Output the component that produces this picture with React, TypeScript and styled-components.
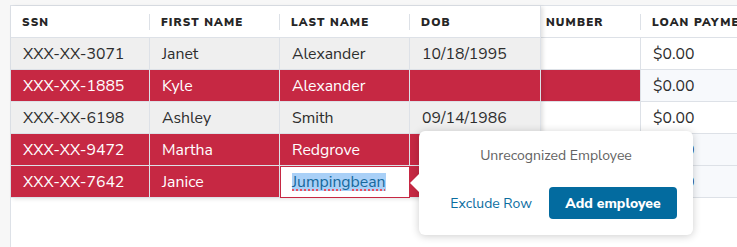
import React from "react";
import styled, { createGlobalStyle, css } from "styled-components";

const GlobalStyle = createGlobalStyle`
  html, body {
    margin: 0;
    padding: 0;
    background: #f7f7f7;
    font-family: "Nunito Sans", Lato, "Open Sans", sans-serif;
  }
`;

type Tone = "grey" | "white" | "red" | "tint";

type RowData = {
  ssn: string;
  first: string;
  last: string;
  dob: string;
  flagged: boolean;
  editing?: boolean;
};

const rows: RowData[] = [
  { ssn: "XXX-XX-3071", first: "Janet", last: "Alexander", dob: "10/18/1995", flagged: false },
  { ssn: "XXX-XX-1885", first: "Kyle", last: "Alexander", dob: "", flagged: true },
  { ssn: "XXX-XX-6198", first: "Ashley", last: "Smith", dob: "09/14/1986", flagged: false },
  { ssn: "XXX-XX-9472", first: "Martha", last: "Redgrove", dob: "", flagged: true },
  { ssn: "XXX-XX-7642", first: "Janice", last: "Jumpingbean", dob: "", flagged: true, editing: true },
];

const BORDER = "#dde1e7";
const RED = "#c62843";

const Page = styled.div`
  height: 247px;
  padding: 5px 0 0 10px;
  box-sizing: border-box;
  overflow: hidden;
`;

const Table = styled.div`
  position: relative;
  display: flex;
  height: 100%;
  background: #fff;
  border-top: 1px solid ${BORDER};
  border-left: 1px solid ${BORDER};
`;

const Pinned = styled.div`
  position: relative;
  z-index: 1;
  align-self: flex-start;
  display: flex;
  flex-direction: column;
  background: #fff;
  border-right: 1px solid ${BORDER};
  box-shadow: 2px 1px 4px rgba(0, 0, 0, 0.12);
`;

const Scrolled = styled.div`
  flex: 1;
  display: flex;
  flex-direction: column;
  overflow: hidden;
`;

const Row = styled.div`
  display: flex;
  height: 32px;
  box-sizing: border-box;
  border-bottom: 1px solid ${BORDER};
`;

const HeaderCell = styled.div<{ $w: number; $sep?: boolean; $pad?: number }>`
  position: relative;
  flex: 0 0 ${(p) => p.$w}px;
  display: flex;
  align-items: center;
  padding-left: ${(p) => p.$pad ?? 11}px;
  box-sizing: border-box;
  font-size: 11.5px;
  font-weight: 900;
  letter-spacing: 1.15px;
  color: #262626;
  white-space: nowrap;
  overflow: hidden;
  ${(p) =>
    p.$sep &&
    css`
      &::after {
        content: "";
        position: absolute;
        right: 0;
        top: 8px;
        height: 16px;
        width: 1px;
        background: ${BORDER};
      }
    `}
`;

const toneBg: Record<Tone, string> = {
  grey: "#efefef",
  white: "#ffffff",
  red: RED,
  tint: "#f7f9fc",
};

const Cell = styled.div<{ $w: number; $tone: Tone; $line?: boolean }>`
  flex: 0 0 ${(p) => p.$w}px;
  display: flex;
  align-items: center;
  padding-left: 12px;
  box-sizing: border-box;
  background: ${(p) => toneBg[p.$tone]};
  color: ${(p) => (p.$tone === "red" ? "#fff" : "#2d2d2d")};
  font-size: 15.8px;
  white-space: nowrap;
  ${(p) => p.$line && `border-right: 1px solid ${BORDER};`}
`;

const EditCell = styled.div<{ $w: number }>`
  flex: 0 0 ${(p) => p.$w}px;
  display: flex;
  background: ${RED};
  border-right: 1px solid ${BORDER};
  box-sizing: border-box;
`;

const Editor = styled.div`
  flex: 1;
  display: flex;
  align-items: center;
  padding-left: 11px;
  margin: 0 -1px -1px 0;
  background: #fff;
  border: 1px solid ${RED};
  font-size: 15.8px;
`;

const Selected = styled.span`
  background: #a9d0f7;
  color: #16699d;
  line-height: 18px;
  text-decoration: underline dotted #e8505f;
  text-decoration-thickness: 2px;
  text-underline-offset: 2px;
`;

const Popover = styled.div`
  position: absolute;
  left: 408px;
  top: 125px;
  z-index: 2;
  width: 274px;
  height: 104px;
  box-sizing: border-box;
  padding: 15px 16px 16px;
  background: #fff;
  border-radius: 6px;
  box-shadow: 0 1px 8px rgba(0, 0, 0, 0.2);
  display: flex;
  flex-direction: column;
  justify-content: space-between;

  &::before {
    content: "";
    position: absolute;
    left: -9px;
    top: 43px;
    border-top: 9px solid transparent;
    border-bottom: 9px solid transparent;
    border-right: 9px solid #fff;
  }
`;

const PopTitle = styled.div`
  text-align: center;
  font-size: 14px;
  color: #626262;
`;

const Actions = styled.div`
  display: flex;
  align-items: center;
  justify-content: flex-end;
  gap: 17px;
`;

const LinkButton = styled.button`
  background: none;
  border: none;
  padding: 0;
  font: inherit;
  font-size: 14px;
  color: #0b6d9f;
  cursor: pointer;
`;

const PrimaryButton = styled.button`
  height: 32px;
  width: 128px;
  border: none;
  border-radius: 4px;
  background: #036b9f;
  color: #fff;
  font: inherit;
  font-size: 14px;
  font-weight: 800;
  cursor: pointer;
`;

const W = { ssn: 139, first: 130, last: 130, dob: 130, num: 100, loan: 160 };

export default function App() {
  return (
    <>
      <GlobalStyle />
      <Page>
        <Table>
          <Pinned>
            <Row>
              <HeaderCell $w={W.ssn} $sep>SSN</HeaderCell>
              <HeaderCell $w={W.first} $sep>FIRST NAME</HeaderCell>
              <HeaderCell $w={W.last} $sep>LAST NAME</HeaderCell>
              <HeaderCell $w={W.dob}>DOB</HeaderCell>
            </Row>
            {rows.map((r) => {
              const tone: Tone = r.flagged ? "red" : "grey";
              return (
                <Row key={r.ssn}>
                  <Cell $w={W.ssn} $tone={tone} $line>{r.ssn}</Cell>
                  <Cell $w={W.first} $tone={tone} $line>{r.first}</Cell>
                  {r.editing ? (
                    <EditCell $w={W.last}>
                      <Editor>
                        <Selected>{r.last}</Selected>
                      </Editor>
                    </EditCell>
                  ) : (
                    <Cell $w={W.last} $tone={tone} $line>{r.last}</Cell>
                  )}
                  <Cell $w={W.dob} $tone={tone}>{r.dob}</Cell>
                </Row>
              );
            })}
          </Pinned>
          <Scrolled>
            <Row>
              <HeaderCell $w={W.num} $sep $pad={5}>NUMBER</HeaderCell>
              <HeaderCell $w={W.loan}>LOAN PAYMENT</HeaderCell>
            </Row>
            {rows.map((r) => (
              <Row key={r.ssn}>
                <Cell $w={W.num} $tone={r.flagged ? "red" : "white"} $line />
                <Cell $w={W.loan} $tone={r.flagged ? "tint" : "white"}>$0.00</Cell>
              </Row>
            ))}
          </Scrolled>
          <Popover>
            <PopTitle>Unrecognized Employee</PopTitle>
            <Actions>
              <LinkButton>Exclude Row</LinkButton>
              <PrimaryButton>Add employee</PrimaryButton>
            </Actions>
          </Popover>
        </Table>
      </Page>
    </>
  );
}
